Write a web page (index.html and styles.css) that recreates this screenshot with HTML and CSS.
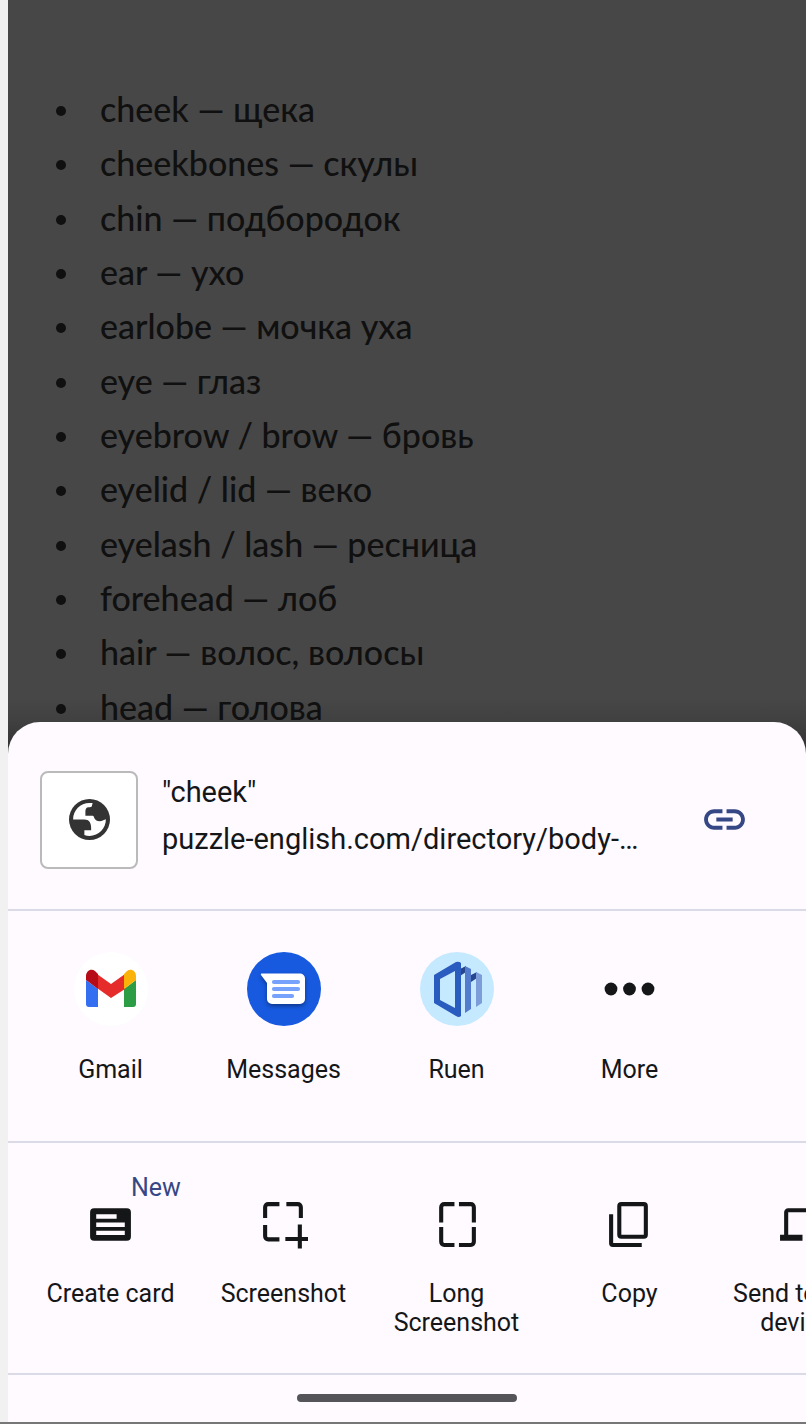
FILE: index.html
```html
<!DOCTYPE html>
<html lang="en">
<head>
<meta charset="utf-8">
<meta name="viewport" content="width=device-width, initial-scale=1">
<title>Share</title>
<link rel="stylesheet" href="styles.css">
</head>
<body>
<div class="screen">
  <main class="article">
    <ul class="words">
      <li>cheek — щека</li>
      <li>cheekbones — скулы</li>
      <li>chin — подбородок</li>
      <li>ear — ухо</li>
      <li>earlobe — мочка уха</li>
      <li>eye — глаз</li>
      <li>eyebrow / brow — бровь</li>
      <li>eyelid / lid — веко</li>
      <li>eyelash / lash — ресница</li>
      <li>forehead — лоб</li>
      <li>hair — волос, волосы</li>
      <li>head — голова</li>
    </ul>
  </main>
  <section class="sheet" aria-label="Share">
    <header class="preview">
      <div class="thumb">
        <svg class="globe" viewBox="2 2 20 20" aria-hidden="true"><circle cx="12" cy="12" r="10" fill="#333"/><path fill="#fff" d="M4 12C4 7.600 7.500 4 12 4h1.500l-.3 1.300c-.1.500-.4.700-1 .7h-.7C10.400 6 10 6.800 10 8v2.200h3.600c.2 0 .4.200.5.500.4 1.500 1.500 2.200 2.900 2.200 1.300 0 2.200-.9 3-1C20 16.400 16.500 20 12 20c-.9 0-1.700-.1-2.500-.4V17.200h3.300V16c0-2.300-1-4-3.300-4z"/></svg>
      </div>
      <div class="summary">
        <p>"cheek"</p>
        <p>puzzle-english.com/directory/body-…</p>
      </div>
      <button class="link" aria-label="Copy link">
        <svg class="icon" viewBox="0 0 24 24" fill="#364785" aria-hidden="true"><path d="M3.900 12c0-1.710 1.390-3.100 3.100-3.100h4V7H7c-2.760 0-5 2.240-5 5s2.240 5 5 5h4v-1.900H7c-1.710 0-3.100-1.390-3.100-3.100zM8 13h8v-2H8v2zm9-6h-4v1.900h4c1.710 0 3.100 1.390 3.100 3.100s-1.390 3.100-3.100 3.100h-4V17h4c2.760 0 5-2.240 5-5s-2.240-5-5-5z"/></svg>
      </button>
    </header>
    <nav class="row apps" aria-label="Apps">
      <button class="item">
        <svg class="app" viewBox="0 0 74 74" aria-hidden="true"><circle cx="37" cy="37" r="37" fill="#fff"/><path fill="#346ff1" d="M12 28l12 9v18h-9a3 3 0 0 1-3-3z"/><path fill="#2c9c45" d="M50 37l12-9v24a3 3 0 0 1-3 3h-9z"/><path fill="#e52c2b" d="M23 22l14 10 14-10v15L37 46 23 36z"/><path fill="#b50c18" d="M12 28v-4c0-5 5-8 9-5l3 3v15z"/><path fill="#fbb30a" d="M62 28v-4c0-5-5-8-9-5l-3 3v15z"/></svg>
        <span class="label">Gmail</span>
      </button>
      <button class="item">
        <svg class="app" viewBox="0 0 74 74" aria-hidden="true"><circle cx="37" cy="37" r="37" fill="#175ae0"/><path class="bubble" fill="#fff" d="M15 21.500h38a5 5 0 0 1 5 5V47a5 5 0 0 1-5 5H25a5 5 0 0 1-5-5V31l-6-8c-.5-1 0-1.500 1-1.500z"/><path stroke="#77a2fb" stroke-width="4.200" stroke-linecap="round" d="M27 30h24M27 37h24M27 44h18"/></svg>
        <span class="label">Messages</span>
      </button>
      <button class="item">
        <svg class="app" viewBox="0 0 74 74" aria-hidden="true"><circle cx="37" cy="37" r="37" fill="#c5e9ff"/><path fill="#27458c" d="M40 17l6-3v6l-6 4zM51 23l6-3v6l-6 4z"/><path fill="#527bcd" d="M45 14l6 3v40l-6 4z"/><path fill="#7c9cda" d="M56 20l6 3v28l-6 4z"/><path fill="#2a5bbf" fill-rule="evenodd" d="M14 23l22-13q3-1 5 1v53q-2 2-5 0L14 51zM20 27v21l15 8V19z"/></svg>
        <span class="label">Ruen</span>
      </button>
      <button class="item">
        <svg class="app" viewBox="0 0 74 74" fill="#151618" aria-hidden="true"><circle cx="18" cy="37" r="6.400"/><circle cx="36.500" cy="37" r="6.400"/><circle cx="55" cy="37" r="6.400"/></svg>
        <span class="label">More</span>
      </button>
    </nav>
    <nav class="row actions" aria-label="Actions">
      <button class="item">
        <span class="badge">New</span>
        <svg class="icon" viewBox="0 0 24 24" aria-hidden="true"><path fill="#151618" fill-rule="evenodd" d="M4 4h16a2 2 0 0 1 2 2v12a2 2 0 0 1-2 2H4a2 2 0 0 1-2-2V6a2 2 0 0 1 2-2zM5 7v2.200h10V7zM5 11v2.200h14V11zM5 15v2.200h14V15z"/></svg>
        <span class="label">Create card</span>
      </button>
      <button class="item">
        <svg class="icon" viewBox="0 0 24 24" fill="none" stroke="#151618" stroke-width="2" aria-hidden="true"><path d="M3 8.800V3.500A1.500 1.500 0 0 1 4.500 2h5.500M13.400 2h5.600a1.500 1.500 0 0 1 1.500 1.500v5.300M3 12.300v5.500a1.500 1.500 0 0 0 1.500 1.500h5.500M12.900 19.100h11.100M20 12v11.700"/></svg>
        <span class="label">Screenshot</span>
      </button>
      <button class="item">
        <svg class="icon" viewBox="0 0 24 24" fill="none" stroke="#151618" stroke-width="2" aria-hidden="true"><path d="M4.500 11V3.500A1.500 1.500 0 0 1 6 2h5M13.200 2H19a1.500 1.500 0 0 1 1.500 1.500V11M4.500 13.200v7.300A1.500 1.500 0 0 0 6 22h5M13.200 22H19a1.500 1.500 0 0 0 1.500-1.500v-7.300"/></svg>
        <span class="label">Long Screenshot</span>
      </button>
      <button class="item">
        <svg class="icon" viewBox="0 0 24 24" fill="none" stroke="#151618" stroke-width="2" aria-hidden="true"><rect x="7" y="2" width="13" height="16" rx="1"/><path d="M3 7v14.200a.8.800 0 0 0 .8.800H18"/></svg>
        <span class="label">Copy</span>
      </button>
      <button class="item">
        <svg class="icon" viewBox="0 0 24 24" fill="#151618" aria-hidden="true"><path d="M5 6h18V4H5c-1.100 0-2 .9-2 2v11H1v3h11v-3H5V6zm19 2h-6c-.55 0-1 .45-1 1v10c0 .55.450 1 1 1h6c.55 0 1-.45 1-1V9c0-.55-.45-1-1-1zm-1 9h-4v-7h4v7z"/></svg>
        <span class="label">Send to your devices</span>
      </button>
    </nav>
    <footer class="gesture"><span class="handle"></span></footer>
  </section>
</div>
</body>
</html>
```
FILE: styles.css
```css
* {
  box-sizing: border-box;
}

body {
  margin: 0;
  background: #f1f1f1;
  color: #151618;
  font-family: Roboto, "Noto Sans", sans-serif;
}

.screen {
  display: flex;
  flex-direction: column;
  min-height: 100vh;
  padding-left: 8px;
  border-bottom: 2px solid #777;
  overflow: hidden;
}

.article {
  display: flex;
  flex: 1;
  padding: 82px 32px 20px 92px;
  background: linear-gradient(to top, #303030, #404040 32px, #474747 56px);
}

.words {
  display: grid;
  grid-auto-rows: 1fr;
  flex: 1;
  margin: 0;
  padding: 0;
  list-style: none;
  color: #101010;
  font: 500 34px/54px Lato, "Noto Sans", sans-serif;
}

.words li {
  display: flex;
  align-items: center;
}

.words li::before {
  content: "";
  width: 10px;
  height: 10px;
  margin: 4px 34px 0 -44px;
  border-radius: 50%;
  background: #101010;
}

.sheet {
  position: relative;
  margin-top: -32px;
  border-radius: 32px 32px 0 0;
  background: #fefaff;
}

.preview {
  display: flex;
  align-items: center;
  gap: 24px;
  height: 189px;
  padding: 8px 57px 0 32px;
  border-bottom: 2px solid #dbdbe7;
}

.thumb {
  display: grid;
  place-items: center;
  flex: none;
  width: 98px;
  height: 98px;
  border: 2px solid #bababa;
  border-radius: 8px;
  background: #fff;
}

.globe {
  width: 41px;
  height: 41px;
}

.summary {
  flex: 1;
  min-width: 0;
  padding-bottom: 8px;
  font-size: 29px;
  line-height: 47px;
}

.summary p {
  margin: 0;
  overflow: hidden;
  text-overflow: ellipsis;
  white-space: nowrap;
}

button {
  padding: 0;
  border: 0;
  background: none;
  color: inherit;
  font: inherit;
}

.icon {
  display: block;
  flex: none;
  width: 49px;
  height: 49px;
}

.row {
  display: flex;
  height: 232px;
  padding-left: 16px;
  border-bottom: 2px solid #dbdbe7;
  overflow: hidden;
}

.item {
  display: flex;
  flex: none;
  flex-direction: column;
  align-items: center;
  position: relative;
  width: 173px;
}

.apps .item {
  gap: 29px;
  padding-top: 41px;
}

.actions .item {
  gap: 30px;
  padding-top: 57px;
}

.app {
  display: block;
  flex: none;
  width: 74px;
  height: 74px;
}

.bubble {
  filter: drop-shadow(0 2px 2px rgba(0, 0, 0, 0.4));
}

.label {
  max-width: 144px;
  font-size: 25px;
  line-height: 29px;
}

.badge {
  position: absolute;
  top: 30px;
  left: 107px;
  color: #364785;
  font-size: 25px;
  line-height: 29px;
}

.gesture {
  display: flex;
  align-items: center;
  justify-content: center;
  height: 47px;
  padding-bottom: 2px;
}

.handle {
  width: 220px;
  height: 8px;
  border-radius: 4px;
  background: #555458;
}
```
